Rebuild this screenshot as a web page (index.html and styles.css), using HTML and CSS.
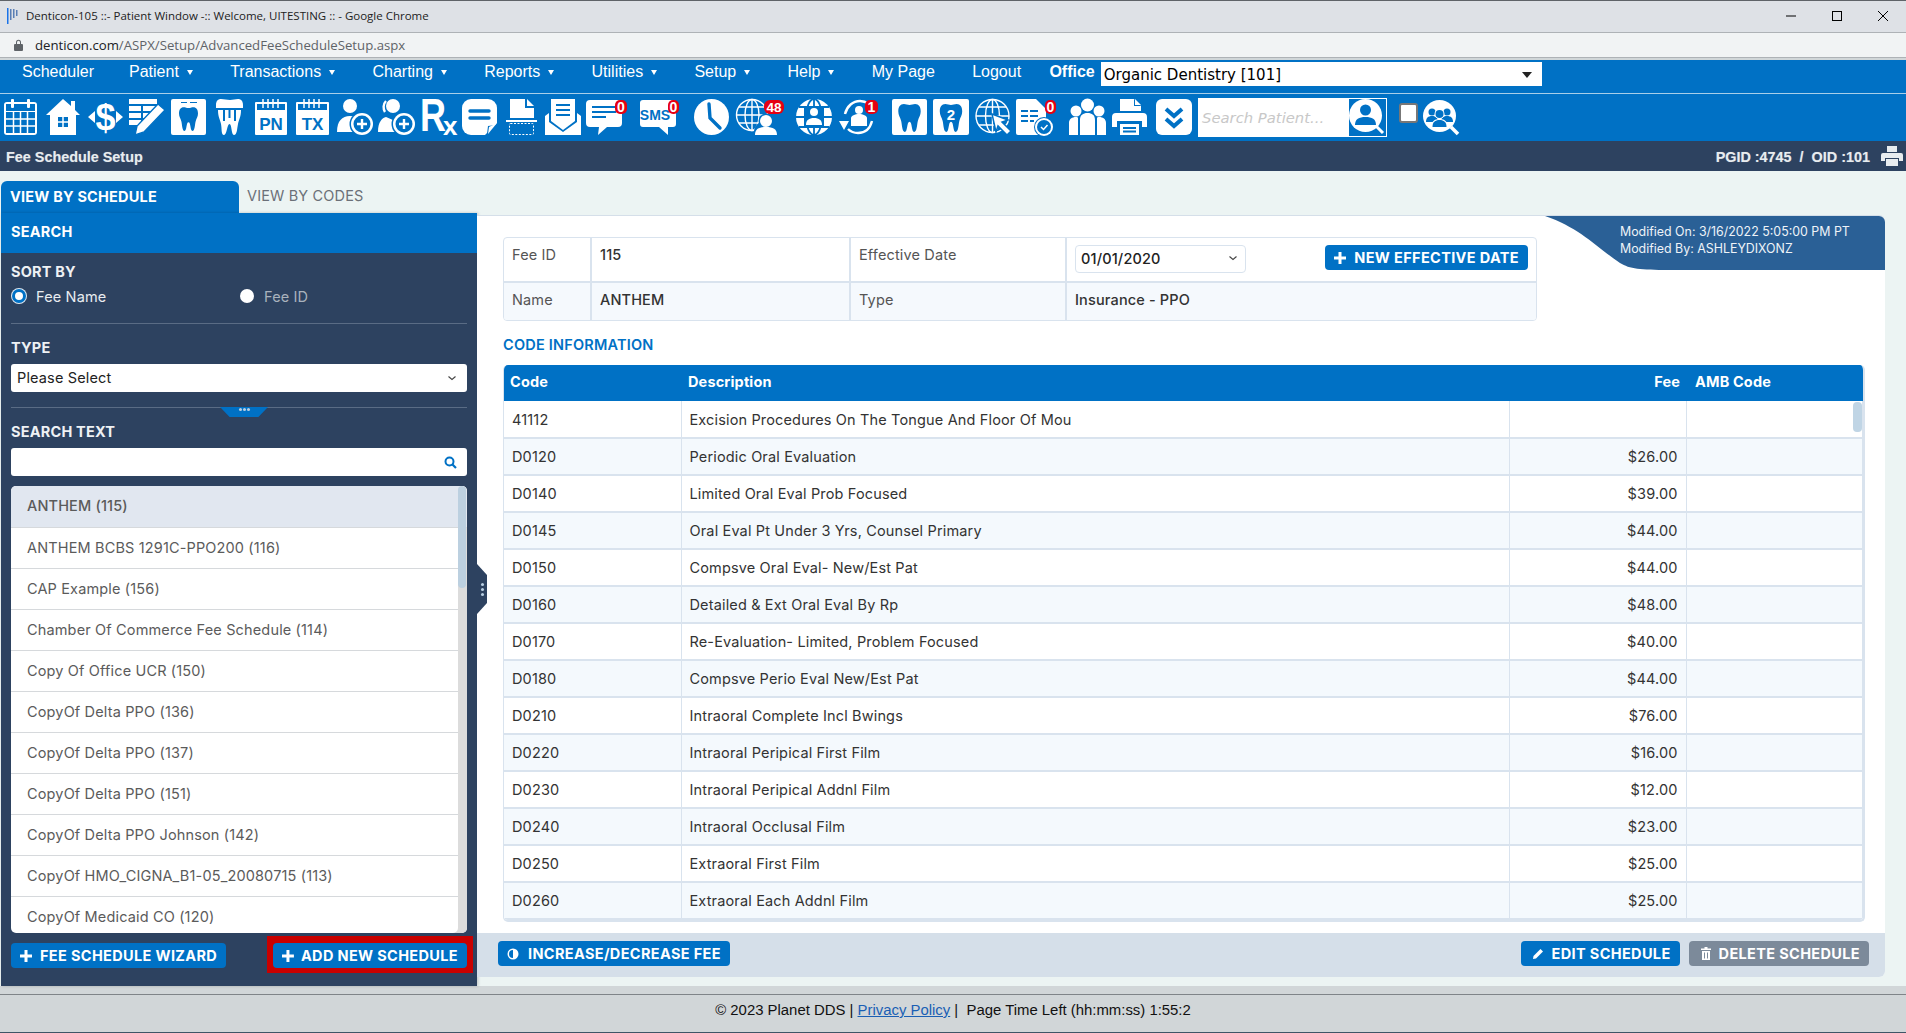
FILE: index.html
```html
<!DOCTYPE html>
<html lang="en">
<head>
  <meta charset="UTF-8" />
  <title>Denticon-105 :: Fee Schedule Setup</title>
  <link rel="stylesheet" href="styles.css">
</head>
<body>

<svg class="defs" width="0" height="0">
  <symbol id="tooth" viewBox="0 0 24 30"><path d="M6 0C2 0 0 3 0 8c0 4 2 6 3 10 1 4 1 12 4 12 3 0 2-11 5-11s2 11 5 11c3 0 3-8 4-12 1-4 3-6 3-10 0-5-2-8-6-8-2 0-4 1-6 1S8 0 6 0z"/></symbol>
  <symbol id="plus" viewBox="0 0 12 12"><path d="M4.5 0h3v4.5H12v3H7.5V12h-3V7.5H0v-3h4.5z"/></symbol>
  <symbol id="chev" viewBox="0 0 10 6"><path d="M1.5 1.5L5 4.500l3.500-3" fill="none" stroke="#444" stroke-width="1.100"/></symbol>
</svg>

<div class="titlebar">
  <svg class="favicon" width="12" height="16" viewBox="0 0 12 16"><path fill="#1a73e8" d="M0 0h1.5v16H0z"/><path fill="#5a7fb5" d="M3 1h1.5v11H3zM6 1h1.5v9H6zM9 2h1.5v6H9z"/></svg>
  <span class="wintitle">Denticon-105 ::- Patient Window -:: Welcome, UITESTING :: - Google Chrome</span>
  <div class="winbtns">
    <svg width="12" height="12" viewBox="0 0 12 12"><path d="M1 6h10" stroke="#000" stroke-width="1"/></svg>
    <svg width="12" height="12" viewBox="0 0 12 12"><rect x="1.5" y="1.5" width="9" height="9" fill="none" stroke="#000"/></svg>
    <svg width="12" height="12" viewBox="0 0 12 12"><path d="M1 1l10 10M11 1L1 11" stroke="#000" stroke-width="1"/></svg>
  </div>
</div>

<div class="addrbar">
  <svg width="9" height="12" viewBox="0 0 9 12"><path fill="#5f6368" d="M1 5h1V3.2a2.5 2.5 0 0 1 5 0V5h1a1 1 0 0 1 1 1v5a1 1 0 0 1-1 1H1a1 1 0 0 1-1-1V6a1 1 0 0 1 1-1zm2 0h3V3.2a1.5 1.5 0 0 0-3 0z"/></svg>
  <span class="url"><b>denticon.com</b>/ASPX/Setup/AdvancedFeeScheduleSetup.aspx</span>
</div>

<div class="menubar">
  <a class="nav">Scheduler</a>
  <a class="nav">Patient<i class="caret"></i></a>
  <a class="nav">Transactions<i class="caret"></i></a>
  <a class="nav">Charting<i class="caret"></i></a>
  <a class="nav">Reports<i class="caret"></i></a>
  <a class="nav">Utilities<i class="caret"></i></a>
  <a class="nav">Setup<i class="caret"></i></a>
  <a class="nav">Help<i class="caret"></i></a>
  <a class="nav">My Page</a>
  <a class="nav">Logout</a>
  <b class="office">Office</b>
  <div class="office-select"><span>Organic Dentistry [101]</span><i class="caret-dark"></i></div>
</div>

<div class="toolbar">
  <!-- calendar -->
  <svg width="42" height="47" viewBox="0 0 42 47"><rect y="8" width="33" height="33" rx="3"/><rect class="b" x="2" y="10" width="29" height="7"/><path class="b" d="M2 18h29v21H2z"/><path class="ln" d="M9.5 18v21M16.5 18v21M23.5 18v21M2 25h29M2 32h29"/><rect x="7" y="5" width="3" height="9" rx="1"/><rect x="23" y="5" width="3" height="9" rx="1"/></svg>
  <!-- home -->
  <svg width="42" height="47" viewBox="0 0 42 47"><path d="M17 5l8 7V7h4v9l5 5h-4v20H4V21H0z"/><rect class="b" x="12" y="23" width="10" height="10"/><path class="ln" d="M17 23v10M12 28h10"/></svg>
  <!-- dollar -->
  <svg width="41" height="47" viewBox="0 0 41 47"><path d="M0 23l7-6v12zM35 23l-7-6v12z"/><text class="gl" x="17.5" y="36" font-size="36" text-anchor="middle">$</text></svg>
  <!-- table + pencil -->
  <svg width="42" height="47" viewBox="0 0 42 47"><path d="M0 5h28v5H0zM0 12h12v5H0zM14 12h14v5H14zM0 19h12v5H0zM14 19h9v5h-9zM0 26h12v5H0zM14 26h2v5h-2z"/><path d="M29 10l7 6-21 22-9 3 2-9z" stroke="#0071c5" stroke-width="1.4"/></svg>
  <!-- tooth in box -->
  <svg width="45" height="47" viewBox="0 0 45 47"><rect y="5" width="35" height="36" rx="2"/><path class="b" d="M10 8h6v1h-6zM19 8h7v1h-7z"/><use class="b" href="#tooth" x="8" y="12" width="19" height="26"/></svg>
  <!-- implant -->
  <svg width="39" height="47" viewBox="0 0 39 47"><path d="M5 5c3 0 6 1 9 1s5-1 8-1c3 0 5 2 5 6v3H0v-3c0-4 2-6 5-6z"/><path d="M2 16h23c0 7-2 9-3 14-1 5-1 11-4 11-3 0-2-11-4.500-11S11 41 8 41c-3 0-2-6-3-11-1-5-3-7-3-14z"/><path class="ln-b" d="M8 16v11M13.500 16v8M19 16v11"/></svg>
  <!-- PN -->
  <svg width="41" height="47" viewBox="0 0 41 47"><rect y="8" width="32" height="33" rx="1"/><rect class="b" x="2" y="10" width="28" height="6"/><path class="ln" d="M8 5v9M13 5v9M18 5v9M23 5v9"/><text class="gl bt" x="16" y="36" font-size="17" text-anchor="middle">PN</text></svg>
  <!-- TX -->
  <svg width="41" height="47" viewBox="0 0 41 47"><rect y="8" width="33" height="33" rx="1"/><rect class="b" x="2" y="10" width="29" height="6"/><path class="ln" d="M8 5v9M13 5v9M18 5v9M23 5v9"/><text class="gl bt" x="16.500" y="36" font-size="17" text-anchor="middle">TX</text></svg>
  <!-- add user -->
  <svg width="41" height="47" viewBox="0 0 41 47"><circle cx="13" cy="12" r="7"/><path d="M0 38c0-11 5-16 13-16 8 0 13 5 13 16z"/><circle class="b" cx="25" cy="30" r="12.500"/><circle cx="25" cy="30" r="11"/><circle class="b" cx="25" cy="30" r="8.500"/><path class="ln2" d="M25 25v10M20 30h10"/></svg>
  <!-- add user 2 -->
  <svg width="43" height="47" viewBox="0 0 43 47"><path class="ln2" d="M8 7c-3 3-3 8-1 11" fill="none"/><circle cx="15" cy="12" r="7"/><path d="M0 38c0-10 4-14 8-15l7 3 7-3c6 2 8 7 8 15z"/><circle class="b" cx="26" cy="30" r="12.500"/><circle cx="26" cy="30" r="11"/><circle class="b" cx="26" cy="30" r="8.500"/><path class="ln2" d="M26 25v10M21 30h10"/></svg>
  <!-- Rx -->
  <svg width="41" height="47" viewBox="0 0 41 47"><text class="gl" transform="translate(-1 37) scale(1 1.3)" font-size="36">R</text><text class="gl" x="22" y="41" font-size="26">x</text></svg>
  <!-- note -->
  <svg width="44" height="47" viewBox="0 0 44 47"><path d="M9 5h17a9 9 0 0 1 9 9v15L23 41H9a9 9 0 0 1-9-9V14a9 9 0 0 1 9-9z"/><path class="ln-b3" d="M8 17h19M8 24h19"/><path class="b" d="M34 31l-9 9 1-8z"/><path d="M36 29L27 40l1-7z" transform="translate(-1 0)"/></svg>
  <!-- scan doc -->
  <svg width="39" height="47" viewBox="0 0 39 47"><path d="M4 5h15v9h9v10H4z"/><path d="M21 5l7 7h-7z"/><path d="M0 26h31v2H0z"/><rect x="3.500" y="29.500" width="24" height="11" rx="1" fill="none" stroke="#fff" stroke-dasharray="2 1.500"/></svg>
  <!-- mail -->
  <svg width="41" height="47" viewBox="0 0 41 47"><path d="M6 5h24v22l-12 9-12-9z"/><path class="ln-b" d="M11 11h14M11 16h14M11 21h14"/><path d="M0 22l4-3v9l14 10 14-10v-9l4 3v19H0z"/></svg>
  <!-- chat -->
  <svg width="54" height="47" viewBox="0 0 54 47"><path d="M4 6h28a4 4 0 0 1 4 4v19a4 4 0 0 1-4 4H21l-9 8 1-8H4a4 4 0 0 1-4-4V10a4 4 0 0 1 4-4z"/><path class="ln-b" d="M6 13h24M6 18h24M6 23h14"/><rect class="red" x="29" y="6" width="12" height="14" rx="5"/><text class="gl" x="35" y="18" font-size="14" text-anchor="middle">0</text></svg>
  <!-- sms -->
  <svg width="54" height="47" viewBox="0 0 54 47"><path d="M3 6h30a3 3 0 0 1 3 3v21a3 3 0 0 1-3 3h-5v8l-9-8H3a3 3 0 0 1-3-3V9a3 3 0 0 1 3-3z"/><text class="gl bt" x="15" y="26" font-size="14" text-anchor="middle">SMS</text><rect class="red" x="28" y="6" width="11" height="14" rx="5"/><text class="gl" x="33.500" y="18" font-size="14" text-anchor="middle">0</text></svg>
  <!-- clock -->
  <svg width="41" height="47" viewBox="0 0 41 47"><ellipse cx="17.500" cy="23" rx="17.500" ry="18"/><path class="ln-b3" d="M15 10l1 14 10 10"/></svg>
  <!-- globe + user -->
  <svg width="61" height="47" viewBox="0 0 61 47"><g class="wire"><circle cx="17" cy="21" r="15.500"/><ellipse cx="17" cy="21" rx="7" ry="15.500"/><path d="M17 5.500v31M1.500 21h31M4 13h26M4 29h26"/></g><circle class="b" cx="31" cy="27" r="7.500"/><circle class="b" cx="30" cy="38" r="11"/><circle cx="31" cy="27" r="6"/><path d="M20 41c0-6 4-8 11-8s11 2 11 8z"/><rect class="red" x="29" y="6" width="20" height="14" rx="6"/><text class="gl" x="39" y="18" font-size="13.500" text-anchor="middle">48</text></svg>
  <!-- globe people -->
  <svg width="43" height="47" viewBox="0 0 43 47"><circle cx="18" cy="23" r="18"/><g class="wire-b"><ellipse cx="18" cy="23" rx="8" ry="18"/><path d="M18 5v8M18 33v8M3 13h30M3 33h30M0 23h8M28 23h8"/></g><rect class="b" x="8" y="12" width="20" height="22" rx="2"/><circle cx="18" cy="18" r="4"/><path d="M10 31c0-5 3-7 8-7s8 2 8 7z"/></svg>
  <!-- refresh user -->
  <svg width="53" height="47" viewBox="0 0 53 47"><path class="ln2" fill="none" d="M6 20c2-8 8-13 15-13 4 0 6 1 9 3M33 27c-2 8-7 12-14 12-5 0-8-2-10-4"/><path d="M0 27h10l-5 9zM34 16l-7 2 5-9z"/><circle cx="20" cy="16" r="4"/><path d="M12 32v-8c0-2 4-4 8-4s8 2 8 4v8z"/><rect class="red" x="26" y="6" width="13" height="14" rx="5"/><text class="gl" x="32.500" y="18" font-size="14" text-anchor="middle">1</text></svg>
  <!-- tooth -->
  <svg width="41" height="47" viewBox="0 0 41 47"><rect y="5" width="35" height="36" rx="2"/><use class="b" href="#tooth" x="5" y="10" width="25" height="28"/></svg>
  <!-- tooth 2 -->
  <svg width="42" height="47" viewBox="0 0 42 47"><rect y="5" width="36" height="36" rx="2"/><use class="b" href="#tooth" x="5" y="10" width="26" height="28"/><text class="gl" x="18" y="26" font-size="15" text-anchor="middle">2</text></svg>
  <!-- globe cursor -->
  <svg width="41" height="47" viewBox="0 0 41 47"><g class="wire"><circle cx="17.500" cy="22" r="16.500"/><ellipse cx="17.500" cy="22" rx="7" ry="16.500"/><path d="M17.500 5.500v33M1 22h33M4 13h27M4 31h27"/></g><path d="M17 20l16 6-6 2 9 9-4 4-9-9-2 6z" stroke="#0071c5" stroke-width="1.500"/></svg>
  <!-- doc + check -->
  <svg width="53" height="47" viewBox="0 0 53 47"><path d="M2 5h18l10 10v26H2a2 2 0 0 1-2-2V7a2 2 0 0 1 2-2z"/><path class="ln-b" d="M5 17h7M14 17h8M5 22h7M14 22h8M5 27h7M14 27h4"/><circle class="b" cx="28" cy="33" r="10"/><circle cx="28" cy="33" r="9"/><circle class="b" cx="28" cy="33" r="7"/><path class="ln" d="M25 33l2.500 2.500 4-4.500"/><rect class="red" x="29" y="6" width="11" height="14" rx="5"/><text class="gl" x="34.500" y="18" font-size="14" text-anchor="middle">0</text></svg>
  <!-- people -->
  <svg width="43" height="47" viewBox="0 0 43 47"><circle cx="7" cy="17" r="5.500"/><circle cx="30" cy="17" r="5.500"/><circle cx="18.500" cy="11" r="6.500"/><path d="M0 41V29c0-4 3-6 7-6 1 0 2 0 2 1v17zM37 41V29c0-4-3-6-7-6-1 0-2 0-2 1v17zM11 41V26c0-5 3-7 7.500-7s7.500 2 7.500 7v15z"/></svg>
  <!-- printer -->
  <svg width="44" height="47" viewBox="0 0 44 47"><path d="M8 5h14l7 7v5H8z"/><path class="b" d="M22 5v7h7z"/><path d="M23 5l6 6h-6z"/><path d="M4 19h27a4 4 0 0 1 4 4v10h-5v-6H5v6H0V23a4 4 0 0 1 4-4z"/><path d="M8 30h19v11H8z"/><path class="ln-b" d="M11 34h13M11 37.500h13"/></svg>
  <!-- chevrons -->
  <svg width="42" height="47" viewBox="0 0 42 47"><rect y="5" width="36" height="36" rx="6"/><path class="ln-b4" d="M10 15l8 7 8-7M10 25l8 7 8-7"/></svg>

  <div class="patient-search">
    <span class="ph">Search Patient...</span>
    <div class="patient-btn">
      <svg width="37" height="36" viewBox="0 0 37 36"><circle cx="16.500" cy="16.500" r="16.500" fill="#fff"/><circle class="b" cx="16.500" cy="11" r="5.500"/><path class="b" d="M6 26c0-6 4-8 10.500-8S27 20 27 26z"/><path d="M27 27l7 7" stroke="#fff" stroke-width="3"/></svg>
    </div>
  </div>
  <span class="tool-check"></span>
  <svg class="group-search" width="37" height="36" viewBox="0 0 37 36"><ellipse cx="16.500" cy="16" rx="16.500" ry="16"/><circle class="b" cx="9" cy="12" r="3.500"/><circle class="b" cx="24" cy="12" r="3.500"/><path class="b" d="M3 22c0-4 2-6 6-6s6 2 6 6zM18 22c0-4 2-6 6-6s6 2 6 6z"/><circle cx="16.500" cy="14" r="5"/><circle class="b" cx="16.500" cy="14" r="4"/><path d="M8 28c0-6 3-9 8.500-9s8.500 3 8.500 9z"/><path class="b" d="M9.500 27c0-5 2.500-7 7-7s7 2 7 7z"/><path d="M28 27l7 7" stroke="#fff" stroke-width="3.500"/></svg>
</div>

<div class="pagehead">
  <span class="pagetitle">Fee Schedule Setup</span>
  <span class="pgid">PGID :4745 &nbsp;/&nbsp; OID :101</span>
  <svg width="22" height="20" viewBox="0 0 22 20"><path fill="#e8ecef" d="M6 0h10v6H6zM2 7h18a2 2 0 0 1 2 2v6h-4v-3H4v3H0V9a2 2 0 0 1 2-2zM5 13h12v7H5z"/></svg>
</div>

<div class="content">
  <div class="left">
    <div class="tabs">
      <div class="tab on">VIEW BY SCHEDULE</div>
      <div class="tab">VIEW BY CODES</div>
    </div>
    <div class="side">
      <div class="side-head">SEARCH</div>
      <div class="side-body">
        <div class="lbl first">SORT BY</div>
        <div class="radios">
          <label class="radio on"><i></i>Fee Name</label>
          <label class="radio"><i></i>Fee ID</label>
        </div>
        <div class="rule"></div>
        <div class="lbl">TYPE</div>
        <div class="field"><span>Please Select</span><svg width="10" height="6"><use href="#chev"/></svg></div>
        <div class="rule notched"><span class="notch"><em></em><em></em><em></em></span></div>
        <div class="lbl">SEARCH TEXT</div>
        <div class="field">
          <span></span>
          <svg width="13" height="13" viewBox="0 0 13 13"><circle cx="5.500" cy="5.500" r="4" fill="none" stroke="#0071c5" stroke-width="2"/><path d="M8.500 8.500L12 12" stroke="#0071c5" stroke-width="2.200"/></svg>
        </div>
        <div class="fee-list">
          <div class="fee sel">ANTHEM (115)</div>
          <div class="fee">ANTHEM BCBS 1291C-PPO200 (116)</div>
          <div class="fee">CAP Example (156)</div>
          <div class="fee">Chamber Of Commerce Fee Schedule (114)</div>
          <div class="fee">Copy Of Office UCR (150)</div>
          <div class="fee">CopyOf Delta PPO (136)</div>
          <div class="fee">CopyOf Delta PPO (137)</div>
          <div class="fee">CopyOf Delta PPO (151)</div>
          <div class="fee">CopyOf Delta PPO Johnson (142)</div>
          <div class="fee">CopyOf HMO_CIGNA_B1-05_20080715 (113)</div>
          <div class="fee">CopyOf Medicaid CO (120)</div>
          <span class="list-thumb"></span>
        </div>
        <div class="side-btns">
          <button class="btn"><svg width="12" height="12"><use href="#plus"/></svg>FEE SCHEDULE WIZARD</button>
          <span class="redbox"><button class="btn"><svg width="12" height="12"><use href="#plus"/></svg>ADD NEW SCHEDULE</button></span>
        </div>
      </div>
    </div>
  </div>

  <div class="main">
    <span class="grip"><em></em><em></em><em></em></span>
    <div class="banner">
      <svg width="340" height="54" viewBox="0 0 340 54"><path fill="#2a6096" d="M0 0h334a6 6 0 0 1 6 6v48H124c-29 0-39-1-49-7C50 30 35 12 0 0z"/></svg>
      <div class="banner-text">Modified On: 3/16/2022 5:05:00 PM PT<br>Modified By: ASHLEYDIXONZ</div>
    </div>

    <div class="main-body">
      <div class="info">
        <div class="cell">Fee ID</div>
        <div class="cell val">115</div>
        <div class="cell">Effective Date</div>
        <div class="cell date-cell">
          <div class="date"><span>01/01/2020</span><svg width="10" height="6"><use href="#chev"/></svg></div>
          <button class="btn"><svg width="12" height="12"><use href="#plus"/></svg>NEW EFFECTIVE DATE</button>
        </div>
        <div class="cell alt">Name</div>
        <div class="cell alt val">ANTHEM</div>
        <div class="cell alt">Type</div>
        <div class="cell alt val">Insurance - PPO</div>
      </div>

      <div class="sect">CODE INFORMATION</div>

      <div class="codes">
        <table>
          <colgroup><col class="c1"><col class="c2"><col class="c3"><col class="c4"></colgroup>
          <thead><tr><th>Code</th><th>Description</th><th class="num">Fee</th><th>AMB Code</th></tr></thead>
          <tbody>
            <tr><td>41112</td><td>Excision Procedures On The Tongue And Floor Of Mou</td><td class="num"></td><td></td></tr>
            <tr><td>D0120</td><td>Periodic Oral Evaluation</td><td class="num">$26.00</td><td></td></tr>
            <tr><td>D0140</td><td>Limited Oral Eval Prob Focused</td><td class="num">$39.00</td><td></td></tr>
            <tr><td>D0145</td><td>Oral Eval Pt Under 3 Yrs, Counsel Primary</td><td class="num">$44.00</td><td></td></tr>
            <tr><td>D0150</td><td>Compsve Oral Eval- New/Est Pat</td><td class="num">$44.00</td><td></td></tr>
            <tr><td>D0160</td><td>Detailed &amp; Ext Oral Eval By Rp</td><td class="num">$48.00</td><td></td></tr>
            <tr><td>D0170</td><td>Re-Evaluation- Limited, Problem Focused</td><td class="num">$40.00</td><td></td></tr>
            <tr><td>D0180</td><td>Compsve Perio Eval New/Est Pat</td><td class="num">$44.00</td><td></td></tr>
            <tr><td>D0210</td><td>Intraoral Complete Incl Bwings</td><td class="num">$76.00</td><td></td></tr>
            <tr><td>D0220</td><td>Intraoral Peripical First Film</td><td class="num">$16.00</td><td></td></tr>
            <tr><td>D0230</td><td>Intraoral Peripical Addnl Film</td><td class="num">$12.00</td><td></td></tr>
            <tr><td>D0240</td><td>Intraoral Occlusal Film</td><td class="num">$23.00</td><td></td></tr>
            <tr><td>D0250</td><td>Extraoral First Film</td><td class="num">$25.00</td><td></td></tr>
            <tr><td>D0260</td><td>Extraoral Each Addnl Film</td><td class="num">$25.00</td><td></td></tr>
          </tbody>
        </table>
        <span class="code-thumb"></span>
      </div>
    </div>

    <div class="actions">
      <button class="btn wide"><svg width="12" height="12" viewBox="0 0 12 12"><circle cx="6" cy="6" r="5.500" fill="#fff"/><path d="M6 2a4 4 0 0 0 0 8z" fill="#0071c5"/></svg>INCREASE/DECREASE FEE</button>
      <span class="spacer"></span>
      <button class="btn edit"><svg width="12" height="12" viewBox="0 0 12 12"><path d="M8.500 1l2.500 2.500-7 7L1 11l.5-3z"/></svg>EDIT SCHEDULE</button>
      <button class="btn grey"><svg width="10" height="13" viewBox="0 0 10 13"><path d="M3.500 0h3v1.500H10v1.500H0V1.500h3.500zM1 4h8v9H1zM3 5.500v6h1v-6zM6 5.500v6h1v-6z" fill-rule="evenodd"/></svg>DELETE SCHEDULE</button>
    </div>
  </div>
</div>

<div class="foot">
  &copy; 2023 Planet DDS | <a>Privacy Policy</a> |&nbsp; Page Time Left (hh:mm:ss) 1:55:2
</div>

</body>
</html>
```

FILE: styles.css
```css
html, body {
  margin: 0;
  height: 100%;
}
body {
  display: flex;
  flex-direction: column;
  height: 1033px;
  overflow: hidden;
  background: #d1d6d8;
  font-family: Inter, "Liberation Sans", sans-serif;
  font-size: 14.5px;
  letter-spacing: 0.15px;
  color: #333;
}
.defs { position: absolute; }

/* browser chrome */
.titlebar {
  display: flex;
  align-items: center;
  flex: none;
  border-top: 1px solid #5f6368;
  background: #dee1e6;
  padding: 0 0 2px 7px;
  height: 29px;
  font-family: "Open Sans", "Liberation Sans", sans-serif;
  font-size: 11.5px;
  letter-spacing: 0;
  color: #222;
}
.wintitle { margin-left: 7px; }
.winbtns {
  margin-left: auto;
  display: flex;
  gap: 34px;
  padding-right: 17px;
}
.addrbar {
  display: flex;
  align-items: center;
  gap: 13px;
  height: 26px;
  flex: none;
  padding-left: 14px;
  background: #f1f3f4;
  border-top: 1px solid #aeb2b6;
  border-bottom: 1px solid #aeb2b6;
  box-sizing: border-box;
  font-family: "Open Sans", "Liberation Sans", sans-serif;
  font-size: 13.2px;
  letter-spacing: 0;
  color: #5f6368;
}
.url { margin-left: -1px; }
.url b { font-weight: 400; color: #202124; }

/* menu */
.menubar {
  display: flex;
  align-items: flex-start;
  height: 33px;
  flex: none;
  margin-top: 2px;
  padding-left: 22px;
  background: #0071c5;
  border-bottom: 1px solid #a9cfe9;
  font-family: "Liberation Sans", sans-serif;
  font-size: 16px;
  letter-spacing: 0;
  color: #fff;
}
.nav {
  display: flex;
  align-items: center;
  margin-right: 37.3px;
  padding-top: 3px;
}
.nav:first-child { margin-right: 35px; }
.caret {
  display: block;
  margin-left: 8px;
  border-left: 3px solid transparent;
  border-right: 3px solid transparent;
  border-top: 5px solid #fff;
}
.office {
  margin-left: -9px;
  padding-top: 3px;
}
.office-select {
  display: flex;
  align-items: center;
  justify-content: space-between;
  width: 441px;
  height: 24px;
  margin: 2px 0 0 6px;
  padding: 1px 10px 0 3px;
  box-sizing: border-box;
  background: #fff;
  color: #000;
  font-family: "DejaVu Sans", sans-serif;
  font-size: 15px;
}
.caret-dark {
  border-left: 5px solid transparent;
  border-right: 5px solid transparent;
  border-top: 6px solid #222;
}

/* icon toolbar */
.toolbar {
  display: flex;
  align-items: center;
  height: 47px;
  flex: none;
  padding-left: 4px;
  background: #0071c5;
  letter-spacing: 0;
}
.toolbar svg { display: block; flex: none; fill: #fff; overflow: visible; }
.toolbar .b { fill: #0071c5; }
.toolbar .red { fill: #e60012; }
.ln { fill: none; stroke: #fff; stroke-width: 1.5; }
.ln2 { fill: none; stroke: #fff; stroke-width: 2.4; }
.ln-b { fill: none; stroke: #0071c5; stroke-width: 2; }
.ln-b3 { fill: none; stroke: #0071c5; stroke-width: 3.4; stroke-linecap: round; }
.ln-b4 { fill: none; stroke: #0071c5; stroke-width: 4; }
.wire { fill: none; stroke: #fff; stroke-width: 1.4; }
.wire-b { fill: none; stroke: #0071c5; stroke-width: 1.8; }
.gl {
  font-family: "Liberation Sans", sans-serif;
  font-weight: 700;
  fill: #fff;
}
.toolbar .bt { fill: #0071c5; }
.patient-search {
  display: flex;
  align-items: center;
  justify-content: space-between;
  box-sizing: border-box;
  width: 189px;
  height: 39px;
  padding: 1px;
  background: #fff;
}
.ph {
  padding-left: 3px;
  font-family: "DejaVu Sans", sans-serif;
  font-style: italic;
  font-size: 14.8px;
  color: #c8c8c8;
}
.patient-btn { background: #0071c5; height: 37px; }
.tool-check {
  width: 15px;
  height: 16px;
  margin: -9px 5px 0 12px;
  background: #fff;
  border: 2px solid #777;
  border-radius: 3px;
  flex: none;
}

/* page heading */
.pagehead {
  display: flex;
  align-items: center;
  height: 30px;
  flex: none;
  padding: 0 3px 0 6px;
  background: #2d4260;
  font-family: "Liberation Sans", sans-serif;
  font-weight: 700;
  font-size: 14.4px;
  letter-spacing: 0;
  color: #e8ecef;
  text-shadow: 0 0 1px rgba(255,255,255,0.35);
}
.pagetitle, .pgid { padding-top: 2px; }
.pgid { margin-left: auto; margin-right: 11px; }

.content {
  display: flex;
  height: 815px;
  flex: none;
  background: #ecf4f3;
}
.left {
  width: 476px;
  margin-left: 1px;
  padding-top: 10px;
  display: flex;
  flex-direction: column;
  flex: none;
}
.tabs { display: flex; height: 32px; flex: none; }
.tab {
  padding: 0 8px;
  line-height: 30px;
  color: #6b7078;
  white-space: nowrap;
}
.tab.on {
  width: 238px;
  box-sizing: border-box;
  padding-left: 9px;
  background: #0071c5;
  border-radius: 6px 6px 0 0;
  color: #fff;
  font-weight: 700;
  letter-spacing: 0.2px;
  line-height: 32px;
}
.side {
  flex: 1;
  display: flex;
  flex-direction: column;
  background: #2d4260;
  box-shadow: 1px 0 3px rgba(0,0,0,0.2);
}
.side-head {
  height: 40px;
  line-height: 38px;
  flex: none;
  padding-left: 10px;
  background: #0071c5;
  color: #fff;
  font-weight: 700;
  letter-spacing: 0.2px;
}
.side-body { padding: 0 10px; color: #fff; }
.lbl {
  height: 16px;
  line-height: 16px;
  margin: 9px 0 8px;
  font-weight: 700;
  letter-spacing: 0.2px;
  color: #eef1f4;
}
.lbl.first { margin-top: 11px; margin-bottom: 7px; }
.radios { display: flex; height: 18px; }
.radio {
  width: 228px;
  display: flex;
  align-items: center;
  gap: 10px;
  color: #a9b2bd;
}
.radio.on { color: #e8ecf0; }
.radio i {
  display: block;
  width: 14px;
  height: 14px;
  box-sizing: border-box;
  border-radius: 50%;
  background: #fff;
  margin-left: 1px;
}
.radio.on i { border: 3px solid #0071c5; box-shadow: 0 0 0 1px #dfe8f0; }
.rule {
  height: 1px;
  margin-top: 18px;
  background: #5a6c85;
  margin-bottom: 16px;
}
.notched { position: relative; margin-top: 15px; margin-bottom: 16px; }
.notch {
  position: absolute;
  left: 209px;
  top: 0;
  width: 48px;
  height: 10px;
  display: flex;
  justify-content: center;
  align-items: flex-start;
  gap: 1px;
  background: #0071c5;
  clip-path: polygon(0 0, 100% 0, 80% 100%, 20% 100%);
}
.notch em, .grip em {
  display: block;
  width: 3px;
  height: 3px;
  margin-top: 1px;
  border-radius: 50%;
  background: #b9cfe2;
}
.field {
  display: flex;
  align-items: center;
  justify-content: space-between;
  box-sizing: border-box;
  height: 28px;
  padding: 0 10px 2px 6px;
  background: #fff;
  border-radius: 3px;
  color: #222;
}
.field svg:last-child { margin-top: 2px; }
.fee-list {
  position: relative;
  height: 447px;
  margin-top: 10px;
  overflow: hidden;
  background: #fff;
  border-radius: 5px;
  box-shadow: inset -9px 0 0 #dcdcdc;
}
.fee {
  box-sizing: border-box;
  height: 41px;
  line-height: 40px;
  padding-left: 16px;
  border-bottom: 1px solid #d6d9dc;
  color: #5b5b5b;
  margin-right: 9px;
}
.fee.sel {
  height: 42px;
  background: #e1e7f0;
  margin-right: 0;
  font-weight: 500;
}
.list-thumb {
  position: absolute;
  right: 1px;
  top: 0;
  width: 8px;
  height: 102px;
  background: #bcd0e0;
  border-radius: 4px;
}
.side-btns {
  display: flex;
  justify-content: space-between;
  align-items: flex-start;
  padding-top: 10px;
}
.btn {
  display: inline-flex;
  align-items: center;
  gap: 8px;
  height: 25px;
  padding: 0 9px;
  border: none;
  border-radius: 4px;
  background: #0071c5;
  color: #fff;
  fill: #fff;
  font-family: inherit;
  font-weight: 700;
  font-size: 14.5px;
  letter-spacing: 0.35px;
  white-space: nowrap;
}
.btn.grey { background: #7c8a9a; padding-left: 12px; }
.btn.edit { padding-left: 11px; }
.btn.wide { gap: 9px; }
.redbox {
  margin: -7px -6px 0 0;
  padding: 7px 6px 5px;
  background: #c80000;
  display: flex;
}
.redbox .btn { width: 194px; box-sizing: border-box; gap: 7px; }

/* main panel */
.main {
  position: relative;
  width: 1408px;
  height: 762px;
  margin-top: 44px;
  box-sizing: border-box;
  display: flex;
  flex-direction: column;
  background: #fff;
  border-top: 1px solid #d5dfe9;
  border-radius: 0 6px 6px 0;
}
.grip {
  position: absolute;
  left: 0;
  top: 348px;
  width: 10px;
  height: 50px;
  display: flex;
  flex-direction: column;
  align-items: center;
  justify-content: center;
  gap: 1px;
  background: #2d4260;
  clip-path: polygon(0 0, 100% 22%, 100% 78%, 0 100%);
}
.banner {
  position: absolute;
  right: 0;
  top: 0;
  width: 340px;
  height: 54px;
}
.banner svg { display: block; }
.banner-text {
  position: absolute;
  left: 75px;
  top: 7px;
  font-size: 12.4px;
  letter-spacing: 0;
  line-height: 17px;
  color: #eef3f8;
  white-space: nowrap;
}
.main-body {
  flex: 1;
  padding: 21px 20px 0 26px;
}
.info {
  display: grid;
  grid-template-columns: 88px 259px 216px 471px;
  grid-template-rows: 45px 37px;
  box-sizing: border-box;
  width: 1034px;
  border: 1px solid #d9e3ee;
  border-radius: 4px;
  overflow: hidden;
}
.cell {
  box-sizing: border-box;
  padding: 8px;
  border-right: 2px solid #d9e3ee;
  color: #555;
}
.cell:nth-child(4n) { border-right: none; }
.cell:nth-child(-n+4) { border-bottom: 2px solid #d9e3ee; }
.val { color: #333; font-weight: 500; }
.alt { background: #f5f9fd; }
.date-cell {
  display: flex;
  justify-content: space-between;
  padding: 7px 10px 0 8px;
}
.date {
  display: flex;
  align-items: center;
  justify-content: space-between;
  box-sizing: border-box;
  width: 171px;
  height: 28px;
  padding: 0 7px 2px 5px;
  border: 1px solid #d9e3ee;
  border-radius: 4px;
  color: #222;
  font-weight: 500;
}
.sect {
  margin: 16px 0 12px;
  line-height: 16px;
  font-weight: 600;
  letter-spacing: 0.2px;
  color: #0071c5;
}
.codes {
  position: relative;
  height: 557px;
  overflow: hidden;
  border-radius: 5px;
  border: solid #d9e3ee;
  border-width: 0 2px 2px 1px;
  box-sizing: border-box;
}
.codes table {
  width: 100%;
  table-layout: fixed;
  border-collapse: collapse;
}
.c1 { width: 177px; }
.c2 { width: 828px; }
.c3 { width: 177px; }
.codes th {
  height: 36px;
  box-sizing: border-box;
  padding: 0 6px 3px;
  background: #0071c5;
  color: #fff;
  font-weight: 700;
  text-align: left;
}
.codes th:nth-child(2) { padding-left: 7px; }
.codes th:nth-child(4) { padding-left: 9px; }
.codes td {
  height: 37px;
  box-sizing: border-box;
  padding: 0 8px;
  border-right: 1px solid #d9e3ee;
  border-bottom: 2px solid #d9e3ee;
  color: #333;
}
.codes tbody tr:nth-child(even) td { background: #f4f9fd; }
.codes th.num, .codes td.num { text-align: right; }
.code-thumb {
  position: absolute;
  right: 1px;
  top: 37px;
  width: 9px;
  height: 30px;
  background: #c0d5e5;
  border-radius: 4px;
}
.actions {
  display: flex;
  gap: 9px;
  height: 44px;
  flex: none;
  box-sizing: border-box;
  padding: 8px 16px 0 21px;
  background: #d5dfe9;
  border-radius: 0 0 6px 0;
}
.spacer { flex: 1; }

.foot {
  box-sizing: border-box;
  height: 39px;
  margin-top: 8px;
  flex: none;
  border-top: 1px solid #7f8488;
  border-bottom: 1px solid #3e5566;
  line-height: 30px;
  text-align: center;
  font-family: "Liberation Sans", sans-serif;
  font-size: 14.9px;
  letter-spacing: 0;
  color: #111;
}
.foot a { color: #1a5fb4; text-decoration: underline; }
```
